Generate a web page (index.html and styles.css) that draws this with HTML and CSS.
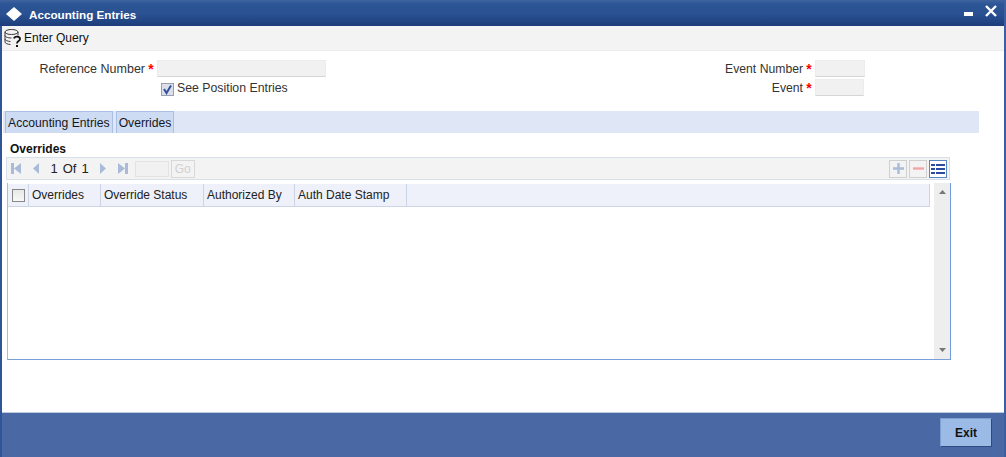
FILE: index.html
```html
<!DOCTYPE html>
<html lang="en">
<head>
	<meta charset="UTF-8">
	<title>Accounting Entries</title>
	<link rel="stylesheet" href="styles.css">
</head>
<body>
	<div class="window">
		<div class="titleBar">
			<svg class="diamond" width="18" height="16" viewBox="0 0 18 16"><path d="M9 1l8 7-8 7-8-7z" fill="#fff"/></svg>
			<span class="titleText">Accounting Entries</span>
			<span class="winButtons">
				<svg class="minButton" width="11" height="11" viewBox="0 0 11 11"><rect x="1" y="6" width="9" height="4" fill="#fff"/></svg>
				<svg width="14" height="14" viewBox="0 0 14 14"><path d="M2 3l10 10M12 3L2 13" stroke="#fff" stroke-width="2.400"/></svg>
			</span>
		</div>
		<div class="toolbar">
			<svg class="queryIcon" width="18" height="19" viewBox="0 0 18 19" fill="none" stroke="#3a3a3a" stroke-width="1">
				<ellipse cx="7.500" cy="3" rx="6.500" ry="2.500"/>
				<path d="M1 3v10c0 1.300 2.500 2.300 5.500 2.500M14 3v3.500M1 6.500c0 1.300 2.500 2.500 6.500 2.500M1 10c0 1.300 2.500 2.300 5.500 2.500"/>
				<path d="M10 9.500c.5-2.500 6-2.500 6 .5 0 2.200-3 2-3 4.500" stroke="#111" stroke-width="1.800"/>
				<rect x="12" y="16" width="2" height="2" fill="#111" stroke="none"/>
			</svg>
			<span>Enter Query</span>
		</div>
		<div class="form">
			<div class="formLeft">
				<label class="fieldLabel">Reference Number</label>
				<span class="req">*</span>
				<span class="field"></span>
				<span class="checkRow">
					<span class="checkBox checked">
						<svg width="11" height="11" viewBox="0 0 11 11"><path d="M2 5l2.500 4L9 1.500" fill="none" stroke="#34529c" stroke-width="2"/></svg>
					</span>
					<span>See Position Entries</span>
				</span>
			</div>
			<div class="formRight">
				<label class="fieldLabel eventLabel">Event Number</label>
				<span class="req">*</span>
				<span class="field"></span>
				<label class="fieldLabel eventLabel">Event</label>
				<span class="req">*</span>
				<span class="field fieldShorter"></span>
			</div>
		</div>
		<div class="tabBar">
			<div class="tab">Accounting Entries</div>
			<div class="tab">Overrides</div>
		</div>
		<div class="sectionTitle">Overrides</div>
		<div class="pager">
			<svg width="12" height="13" viewBox="0 0 12 13" fill="#a9bbd8"><rect x="1" y="1" width="3" height="11"/><path d="M11 1v11L4 6.500z"/></svg>
			<svg class="pagerPrev" width="8" height="13" viewBox="0 0 8 13" fill="#a9bbd8"><path d="M7 1v11L1 6.500z"/></svg>
			<span class="pageText">1</span>
			<span class="pageText">Of</span>
			<span class="pageText">1</span>
			<svg class="pagerNext" width="8" height="13" viewBox="0 0 8 13" fill="#a9bbd8"><path d="M1 1v11l6-5.500z"/></svg>
			<svg class="pagerLast" width="12" height="13" viewBox="0 0 12 13" fill="#a9bbd8"><path d="M1 1v11l7-5.500z"/><rect x="8" y="1" width="3" height="11"/></svg>
			<span class="pageInput"></span>
			<span class="goButton">Go</span>
			<span class="pagerTools">
				<span class="toolButton">
					<svg width="13" height="13" viewBox="0 0 13 13"><path d="M6.500 1v11M1 6.500h11" stroke="#a9bbd8" stroke-width="2.400"/></svg>
				</span>
				<span class="toolButton">
					<svg width="13" height="13" viewBox="0 0 13 13"><path d="M1 6.500h11" stroke="#f0a5a5" stroke-width="2.400"/></svg>
				</span>
				<span class="toolButton toolActive">
					<svg width="14" height="10" viewBox="0 0 14 10" fill="#2a4c9e"><rect x="0" y="0" width="4" height="2"/><rect x="5" y="0" width="9" height="2"/><rect x="0" y="4" width="4" height="2"/><rect x="5" y="4" width="9" height="2"/><rect x="0" y="8" width="4" height="2"/><rect x="5" y="8" width="9" height="2"/></svg>
				</span>
			</span>
		</div>
		<div class="grid">
			<div class="gridMain">
				<div class="gridHead">
					<div class="col colCheck"><span class="checkBox"></span></div>
					<div class="col colOverrides">Overrides</div>
					<div class="col colStatus">Override Status</div>
					<div class="col colAuth">Authorized By</div>
					<div class="col colStamp">Auth Date Stamp</div>
				</div>
			</div>
			<div class="scrollBar">
				<svg width="7" height="4" viewBox="0 0 7 4"><path d="M3.500 0L7 4H0z" fill="#777"/></svg>
				<svg width="7" height="4" viewBox="0 0 7 4"><path d="M0 0h7L3.500 4z" fill="#777"/></svg>
			</div>
		</div>
		<div class="footer">
			<div class="exitButton">Exit</div>
		</div>
	</div>
</body>
</html>
```

FILE: styles.css
```css
html, body {
	width: 100%;
	height: 100%;
	margin: 0;
	padding: 0;
	background: #fff;
}
body {
	font-family: "Liberation Sans", Arial, sans-serif;
	font-size: 12px;
	color: #222;
	overflow: hidden;
}
.window {
	display: flex;
	flex-direction: column;
	width: 1006px;
	height: 457px;
	box-sizing: border-box;
	border-left: 2px solid #2f5596;
	border-right: 2px solid #3c5f9f;
}
.titleBar {
	display: flex;
	align-items: center;
	height: 26px;
	box-sizing: border-box;
	margin: 0 0 0 -2px;
	padding: 2px 0 0 5px;
	background: linear-gradient(#3f639e 0, #2c5596 4px, #2a5192 14px, #1d3d7b 100%);
	color: #fff;
	font-weight: bold;
}
.diamond {
	margin-right: 6px;
}
.titleText {
	font-size: 11.700px;
}
.winButtons {
	display: flex;
	align-self: flex-start;
	gap: 10px;
	margin: 1px 6px 0 auto;
}
.minButton {
	margin-top: 3px;
}
.toolbar {
	display: flex;
	align-items: center;
	height: 25px;
	box-sizing: border-box;
	padding-left: 2px;
	background: #f3f3f3;
	border-bottom: 1px solid #ececec;
	color: #111;
}
.queryIcon {
	margin-right: 2px;
}
.form {
	display: flex;
	justify-content: space-between;
	height: 60px;
	box-sizing: border-box;
	padding: 8px 139px 0 0;
}
.formLeft {
	display: grid;
	grid-template-columns: 143px 12px 169px;
	grid-auto-rows: 19px;
	align-items: center;
}
.formRight {
	display: grid;
	grid-template-columns: 100px 12px 50px;
	grid-auto-rows: 19px;
	align-items: center;
}
.fieldLabel {
	text-align: right;
	font-size: 12.500px;
	color: #333;
}
.eventLabel {
	font-size: 12.200px;
}
.req {
	color: #f00;
	font-size: 14px;
	font-weight: bold;
	text-align: center;
	line-height: 14px;
}
.field {
	display: block;
	height: 17px;
	box-sizing: border-box;
	background: #f1f1f1;
	border: 1px solid #ececec;
	border-bottom-color: #d6d6d6;
}
.fieldShorter {
	width: 49px;
}
.checkRow {
	grid-column: 3;
	display: flex;
	align-items: center;
	padding-left: 4px;
	font-size: 12.300px;
	color: #333;
}
.checkBox {
	display: inline-flex;
	align-items: center;
	justify-content: center;
	width: 13px;
	height: 13px;
	box-sizing: border-box;
	background: linear-gradient(#e8e8e8, #f8f8f8);
	border: 1px solid #888;
}
.checkBox.checked {
	background: #dcdfe8;
	border-color: #98a0b0;
	margin-top: 3px;
	margin-right: 3px;
}
.tabBar {
	display: flex;
	gap: 3px;
	height: 22px;
	margin: 0 25px 0 1px;
	padding-left: 2px;
	background: #dfe6f5;
}
.tab {
	display: flex;
	align-items: center;
	padding: 0 2px 0 2px;
	background: #cddcf2;
	border: 1px solid #a9c0e4;
	border-bottom: 0;
	color: #16161e;
	font-size: 12.200px;
}
.sectionTitle {
	margin: 9px 0 0 8px;
	height: 15px;
	line-height: 14px;
	font-weight: bold;
	color: #111;
}
.pager {
	display: flex;
	align-items: center;
	height: 23px;
	box-sizing: border-box;
	margin: 0 54px 3px 4px;
	padding-left: 3px;
	background: #f3f3f3;
	border: 1px solid #d9dfe9;
	color: #222;
	font-size: 13px;
}
.pagerPrev {
	margin: 0 10.500px 0 10px;
}
.pageText {
	margin-right: 5px;
}
.pagerNext {
	margin: 0 10px 0 5px;
}
.pagerLast {
	margin-right: 6px;
}
.pageInput {
	width: 34px;
	height: 16px;
	box-sizing: border-box;
	background: #f1f1f1;
	border: 1px solid #e3e3e3;
}
.goButton {
	display: flex;
	align-items: center;
	justify-content: center;
	width: 24px;
	height: 18px;
	margin-left: 2px;
	box-sizing: border-box;
	border: 1px solid #d8d8d8;
	color: #d0d0d0;
	font-size: 12px;
}
.pagerTools {
	display: flex;
	gap: 2px;
	margin-left: auto;
	margin-right: 2px;
}
.toolButton {
	display: flex;
	align-items: center;
	justify-content: center;
	width: 18px;
	height: 18px;
	box-sizing: border-box;
	border: 1px solid #d0d0d0;
}
.toolActive {
	border-color: #5b86c6;
	background: #fff;
}
.grid {
	display: flex;
	justify-content: space-between;
	width: 944px;
	height: 177px;
	box-sizing: border-box;
	margin-left: 5px;
	border-left: 1px solid #a9bcd6;
	border-right: 1px solid #6f9bdc;
	border-bottom: 1px solid #7ba0d8;
}
.gridMain {
	width: 922px;
	padding-top: 1px;
}
.gridHead {
	display: flex;
	height: 23px;
	box-sizing: border-box;
	background: #eef1fa;
	border-bottom: 1px solid #cdd4e6;
	border-right: 1px solid #cdd4e6;
}
.col {
	display: flex;
	align-items: center;
	box-sizing: border-box;
	padding-left: 3px;
	border-right: 1px solid #cdd4e6;
	color: #222;
}
.colCheck {
	width: 21px;
	padding-left: 4px;
}
.colOverrides {
	width: 72px;
}
.colStatus {
	width: 103px;
}
.colAuth {
	width: 91px;
}
.colStamp {
	width: 112px;
}
.scrollBar {
	display: flex;
	flex-direction: column;
	align-items: center;
	justify-content: space-between;
	width: 16px;
	padding: 7px 0;
	box-sizing: border-box;
	background: #eeeeee;
}
.footer {
	display: flex;
	justify-content: flex-end;
	align-items: flex-start;
	height: 45px;
	box-sizing: border-box;
	margin: auto 0 0 0;
	padding: 5px 12px 0 0;
	background: #4a68a3;
	border-top: 1px solid #bccbe0;
}
.exitButton {
	display: flex;
	align-items: center;
	justify-content: center;
	width: 52px;
	height: 29px;
	box-sizing: border-box;
	background: #9cbae6;
	border: 1px solid #7f9fd0;
	border-right-color: #2f4a80;
	border-bottom-color: #2f4a80;
	color: #111;
	font-weight: bold;
}
```
